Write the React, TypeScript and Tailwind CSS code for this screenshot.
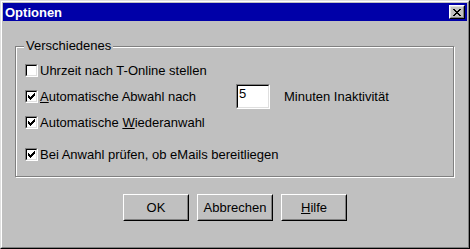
import type { ReactNode } from "react";

// Win9x sunken checkbox
function CheckBox({ checked }: { checked?: boolean }) {
  return (
    <span className="w-[13px] h-[13px] shrink-0 border border-t-[#808080] border-l-[#808080] border-r-white border-b-white">
      <span className="flex h-full w-full items-center justify-center border border-t-black border-l-black border-r-[#dfdfdf] border-b-[#dfdfdf] bg-white">
        {checked && (
          <svg width="7" height="7" viewBox="0 0 7 7" shapeRendering="crispEdges">
            <path
              fill="#000"
              d="M6 0h1v1h-1z M5 1h2v1h-2z M0 2h1v1h-1z M4 2h3v1h-3z M0 3h2v1h-2z M3 3h3v1h-3z M0 4h5v1h-5z M1 5h3v1h-3z M2 6h1v1h-1z"
            />
          </svg>
        )}
      </span>
    </span>
  );
}

function Button({ width, children }: { width: string; children: ReactNode }) {
  return (
    <button className={`${width} h-[27px] border border-t-white border-l-white border-r-black border-b-black bg-[#c0c0c0]`}>
      <span className="flex h-full w-full items-center justify-center border border-t-[#c0c0c0] border-l-[#c0c0c0] border-r-[#808080] border-b-[#808080] leading-[15px]">
        {children}
      </span>
    </button>
  );
}

export default function App() {
  return (
    <div className="w-[470px] h-[249px] bg-[#c0c0c0] border border-t-[#dfdfdf] border-l-[#dfdfdf] border-r-black border-b-black font-['Liberation_Sans',Arial,sans-serif] text-[13px] text-black">
      <div className="flex h-full flex-col border border-t-white border-l-white border-r-[#808080] border-b-[#808080] p-[1px]">
        {/* Title bar */}
        <div className="flex h-[18px] shrink-0 items-center justify-between bg-[#0000a8] pl-[2px] pr-[2px]">
          <span className="font-bold text-white leading-[15px]">Optionen</span>
          <span className="flex h-[14px] w-[16px] border border-t-white border-l-white border-r-black border-b-black bg-[#c0c0c0]">
            <span className="flex h-full w-full items-center justify-center border border-t-[#dfdfdf] border-l-[#dfdfdf] border-r-[#808080] border-b-[#808080]">
              <svg width="8" height="7" viewBox="0 0 8 7" shapeRendering="crispEdges">
                <path
                  fill="#000"
                  d="M0 0h2v1h-2z M6 0h2v1h-2z M1 1h2v1h-2z M5 1h2v1h-2z M2 2h4v1h-4z M3 3h2v1h-2z M2 4h4v1h-4z M1 5h2v1h-2z M5 5h2v1h-2z M0 6h2v1h-2z M6 6h2v1h-2z"
                />
              </svg>
            </span>
          </span>
        </div>

        {/* Group box */}
        <div className="relative mt-[25px] ml-[12px] h-[131px] w-[439px] border border-[#808080] pt-[10px] pl-[9px] shadow-[1px_1px_0_#fff,inset_1px_1px_0_#fff]">
          <span className="absolute left-[8px] top-[-9px] bg-[#c0c0c0] px-[2px] leading-[15px]">Verschiedenes</span>

          <div className="flex h-[26px] items-center">
            <CheckBox />
            <span className="ml-[2px] leading-[15px]">Uhrzeit nach T-Online stellen</span>
          </div>

          <div className="flex h-[26px] items-center">
            <CheckBox checked />
            <span className="ml-[2px] w-[196px] leading-[15px]">
              <u>A</u>utomatische Abwahl nach
            </span>
            <span className="h-[25px] w-[34px] border border-t-[#808080] border-l-[#808080] border-r-white border-b-white">
              <span className="block h-full w-full border border-t-black border-l-black border-r-[#dfdfdf] border-b-[#dfdfdf] bg-white pl-[1px] leading-[15px]">
                5
              </span>
            </span>
            <span className="ml-[14px] leading-[15px]">Minuten Inaktivität</span>
          </div>

          <div className="flex h-[26px] items-center">
            <CheckBox checked />
            <span className="ml-[2px] leading-[15px]">
              Automatische <u>W</u>iederanwahl
            </span>
          </div>

          <div className="mt-[6px] flex h-[26px] items-center">
            <CheckBox checked />
            <span className="ml-[2px] leading-[15px]">Bei Anwahl prüfen, ob eMails bereitliegen</span>
          </div>
        </div>

        {/* Buttons */}
        <div className="mt-[17px] flex justify-center gap-[8px]">
          <Button width="w-[66px]">OK</Button>
          <Button width="w-[76px]">Abbrechen</Button>
          <Button width="w-[66px]">
            <span>
              <u>H</u>ilfe
            </span>
          </Button>
        </div>
      </div>
    </div>
  );
}
